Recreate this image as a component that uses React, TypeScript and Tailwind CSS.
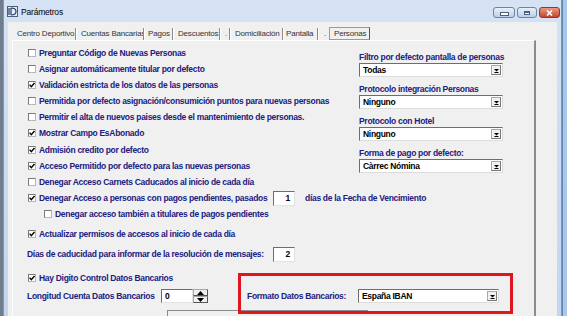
import type { ReactNode } from 'react'

const label = 'text-[8.5px] tracking-[-0.3px] font-bold text-[#202080] whitespace-nowrap leading-none'
const value = 'text-[8.5px] tracking-[-0.3px] font-bold text-black leading-none whitespace-nowrap'

function Check({ on }: { on?: boolean }) {
  return (
    <span className="w-[8px] h-[8px] shrink-0 mr-[3px] bg-white border border-t-[#7a7a7a] border-l-[#7a7a7a] border-r-[#b8b8b8] border-b-[#b8b8b8] flex items-center justify-center">
      {on && (
        <svg width="6" height="6" viewBox="0 0 6 6">
          <path d="M0.6 2.6 L2.3 4.6 L5.5 0.9" stroke="#000" strokeWidth="1.4" fill="none" />
        </svg>
      )}
    </span>
  )
}

function CheckRow({ on, children, className = '' }: { on?: boolean; children: ReactNode; className?: string }) {
  return (
    <div className={`h-[16px] flex items-center ${className}`}>
      <Check on={on} />
      <span className={label}>{children}</span>
    </div>
  )
}

function Arrow() {
  return (
    <svg width="5" height="5" viewBox="0 0 5 5">
      <path d="M0 1 L5 1 L2.5 3.5 Z" fill="#000" />
      <rect x="0.5" y="4" width="4" height="1" fill="#000" />
    </svg>
  )
}

function Select({ text, className = '' }: { text: string; className?: string }) {
  return (
    <div className={`h-[14px] bg-white border border-t-[#6d6d6d] border-l-[#6d6d6d] border-r-[#dcdcdc] border-b-[#dcdcdc] flex items-center ${className}`}>
      <span className={`flex-1 pl-[3px] ${value}`}>{text}</span>
      <span className="w-[10px] h-[10px] mr-[1px] bg-[#f0f0f0] border border-[#a8a8a8] border-r-[#7a7a7a] border-b-[#7a7a7a] flex items-center justify-center">
        <Arrow />
      </span>
    </div>
  )
}

function NumBox({ text }: { text: string }) {
  return (
    <div className={`w-[22px] h-[15px] shrink-0 bg-white border border-t-[#6d6d6d] border-l-[#6d6d6d] border-r-[#e2e2e2] border-b-[#e2e2e2] flex items-center justify-end pr-[4px] ${value}`}>
      {text}
    </div>
  )
}

function Tab({ text, className }: { text: string; className: string }) {
  return (
    <div className={`h-[12px] mt-[1px] flex items-center border-r border-[#8a8a8a] shadow-[1px_0_0_#ffffff] text-[8px] tracking-[-0.2px] text-[#333] leading-none whitespace-nowrap overflow-hidden ${className}`}>
      {text}
    </div>
  )
}

function CaptionButton({ className, children }: { className: string; children: ReactNode }) {
  return (
    <div className={`h-[11px] rounded-[3px] border border-[#6e84a3] flex items-center justify-center ${className}`}>
      {children}
    </div>
  )
}

export default function App() {
  return (
    <div className="w-[567px] h-[316px] overflow-hidden relative flex bg-[#a9c7e6] font-['Liberation_Sans',Arial,sans-serif]">
      <div className="w-[3px] shrink-0 bg-[#6f7d8f]" />

      {/* window */}
      <div className="w-[559px] shrink-0 flex flex-col bg-gradient-to-b from-[#d5e3f4] to-[#c3d6ee] border-x border-[#7d98bb]">
        {/* title bar */}
        <div className="h-[22px] shrink-0 flex items-start">
          <svg className="ml-[3px] mt-[6px]" width="11" height="11" viewBox="0 0 11 11">
            <rect x="0.5" y="0.5" width="10" height="10" fill="#e9eef5" stroke="#4a5d7a" />
            <path d="M2 2 L2 9 M4 2 L4 9 M4 2 Q9 2 9 5.5 Q9 9 4 9" stroke="#1e3b6e" strokeWidth="1.2" fill="none" />
          </svg>
          <span className="ml-[3px] mt-[8px] text-[8.5px] tracking-[-0.2px] text-black leading-none">Parámetros</span>
          <div className="ml-auto mr-[1px] mt-[7px] flex gap-[2px]">
            <CaptionButton className="w-[22px] bg-gradient-to-b from-[#e8f0fa] to-[#bcd0ea]">
              <span className="w-[7px] h-[2px] mt-[3px] bg-white border border-[#4c5e78] box-content" />
            </CaptionButton>
            <CaptionButton className="w-[20px] bg-gradient-to-b from-[#e8f0fa] to-[#bcd0ea]">
              <span className="w-[6px] h-[4px] border border-[#4c5e78] bg-white shadow-[inset_0_1px_0_#4c5e78]" />
            </CaptionButton>
            <CaptionButton className="w-[21px] border-[#8a3a2e] bg-gradient-to-b from-[#e79a86] to-[#c4412c]">
              <svg width="7" height="6" viewBox="0 0 7 6">
                <path d="M1 0.5 L6 5.5 M6 0.5 L1 5.5" stroke="#fff" strokeWidth="1.6" />
              </svg>
            </CaptionButton>
          </div>
        </div>

        {/* client area */}
        <div className="ml-[4px] w-[549px] flex-1 bg-[#f0f0f0] pt-[5px] flex flex-col">
          {/* tabs */}
          <div className="h-[13px] ml-[4px] flex">
            <Tab text="Centro Deportivo" className="w-[64px] pl-[5px]" />
            <Tab text="Cuentas Bancarias" className="w-[68px] pl-[5px]" />
            <Tab text="Pagos" className="w-[29px] pl-[4px]" />
            <Tab text="Descuentos" className="w-[47px] pl-[5px]" />
            <Tab text="." className="w-[10px] pl-[5px]" />
            <Tab text="Domiciliación" className="w-[53px] pl-[5px]" />
            <Tab text="Pantalla" className="w-[35px] pl-[3px]" />
            <div className="w-[11px] pl-[6px] mt-[1px] h-[12px] flex items-center text-[8px] text-[#333] leading-none">.</div>
            <div className="w-[41px] h-[13px] border border-[#9a9a9a] border-r-[#555] bg-[#f0f0f0] flex items-center pl-[4px] text-[8px] tracking-[-0.2px] text-[#333] leading-none">
              Personas
            </div>
          </div>

          {/* tab panel */}
          <div className="ml-[4px] w-[524px] flex-1 border-t border-l border-white border-r-2 border-r-[#8c8c8c] pl-[15px] pt-[4px] flex flex-col">
            <div className="flex">
              <div className="w-[331px] flex flex-col">
                <CheckRow>Preguntar Código de Nuevas Personas</CheckRow>
                <CheckRow>Asignar automáticamente titular por defecto</CheckRow>
                <CheckRow on>Validación estricta de los datos de las personas</CheckRow>
                <CheckRow>Permitida por defecto asignación/consumición puntos para nuevas personas</CheckRow>
                <CheckRow>Permitir el alta de nuevos paises desde el mantenimiento de personas.</CheckRow>
                <CheckRow on>Mostrar Campo EsAbonado</CheckRow>
                <CheckRow on className="mt-[1px]">Admisión credito por defecto</CheckRow>
                <CheckRow on>Acceso Permitido por defecto para las nuevas personas</CheckRow>
              </div>
              <div className="mt-[6px] flex flex-col gap-[6px]">
                {[
                  ['Filtro por defecto pantalla de personas', 'Todas'],
                  ['Protocolo integración Personas', 'Ninguno'],
                  ['Protocolo con Hotel', 'Ninguno'],
                  ['Forma de pago por defecto:', 'Càrrec Nómina'],
                ].map(([l, v]) => (
                  <div key={l} className="h-[26px] flex flex-col">
                    <div className={`h-[12px] flex items-center ${label}`}>{l}</div>
                    <Select text={v} className="w-[144px]" />
                  </div>
                ))}
              </div>
            </div>

            <CheckRow>Denegar Acceso Carnets Caducados al inicio de cada día</CheckRow>
            <div className="h-[16px] flex items-center">
              <Check on />
              <span className={`${label} w-[234px]`}>Denegar Acceso a personas con pagos pendientes, pasados</span>
              <NumBox text="1" />
              <span className={`${label} ml-[10px]`}>días de la Fecha de Vencimiento</span>
            </div>
            <CheckRow className="ml-[16px]">Denegar acceso también a titulares de pagos pendientes</CheckRow>
            <CheckRow on className="mt-[4px]">Actualizar permisos de accesos al inicio de cada día</CheckRow>
            <div className="h-[16px] mt-[4px] -ml-[1px] flex items-center">
              <span className={`${label} w-[246px]`}>Días de caducidad para informar de la resolución de mensajes:</span>
              <NumBox text="2" />
            </div>
            <CheckRow on className="mt-[8px]">Hay Digito Control Datos Bancarios</CheckRow>
            <div className="h-[16px] mt-[2px] -ml-[1px] flex items-center">
              <span className={`${label} w-[134px]`}>Longitud Cuenta Datos Bancarios</span>
              <div className="w-[47px] h-[14px] flex">
                <div className={`w-[32px] bg-white border border-t-[#6d6d6d] border-l-[#6d6d6d] border-r-[#e2e2e2] border-b-[#e2e2e2] flex items-center pl-[3px] ${value}`}>
                  0
                </div>
                <div className="w-[15px] flex flex-col">
                  <div className="flex-1 bg-[#f0f0f0] border border-[#a8a8a8] border-r-[#555] border-b-[#555] flex items-center justify-center">
                    <svg width="7" height="4" viewBox="0 0 7 4"><path d="M0 4 L3.5 0 L7 4 Z" fill="#000" /></svg>
                  </div>
                  <div className="flex-1 bg-[#f0f0f0] border border-[#a8a8a8] border-r-[#555] border-b-[#555] flex items-center justify-center">
                    <svg width="7" height="4" viewBox="0 0 7 4"><path d="M0 0 L7 0 L3.5 4 Z" fill="#000" /></svg>
                  </div>
                </div>
              </div>
              <span className={`${label} ml-[39px] w-[111px]`}>Formato Datos Bancarios:</span>
              <Select text="España IBAN" className="w-[141px]" />
            </div>
            <div className="mt-[6px] ml-[139px] w-[201px] h-[10px] border-t border-l border-[#8a8a8a]" />
          </div>
        </div>
      </div>

      <div className="flex-1 border-l border-[#5d87b4]" />

      {/* highlight annotation */}
      <div className="absolute left-[238px] top-[273px] w-[275px] h-[41px] border-[3px] border-[#e0161e]" />
    </div>
  )
}
